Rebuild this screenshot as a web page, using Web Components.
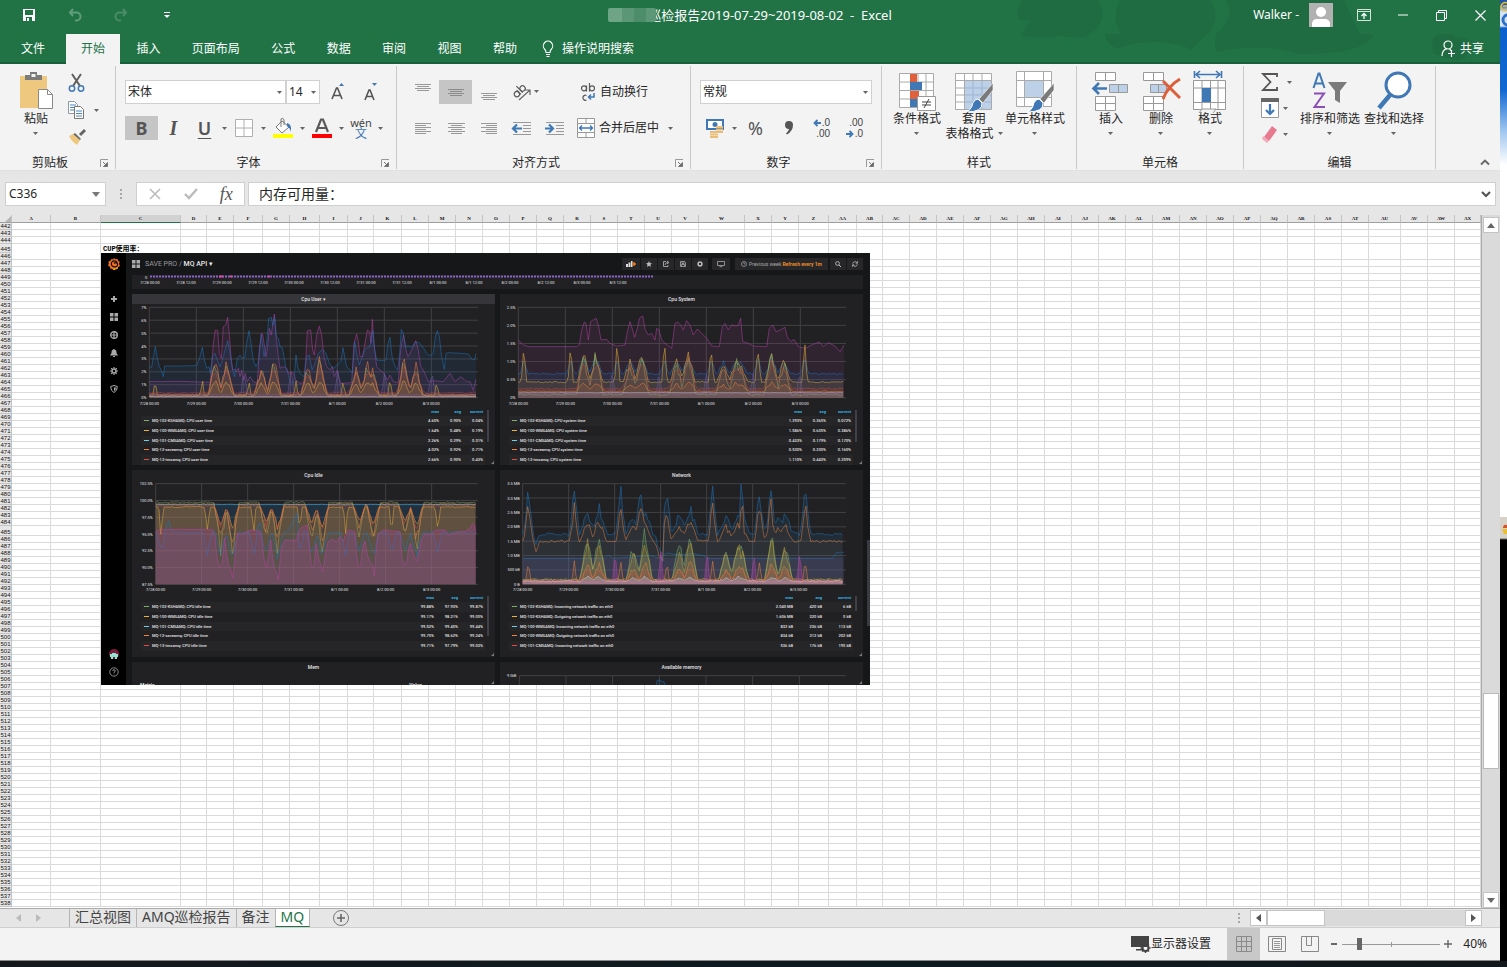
<!DOCTYPE html>
<html lang="zh-CN">
<head>
<meta charset="utf-8">
<title>巡检报告2019-07-29~2019-08-02 - Excel</title>
<style>
html,body{margin:0;height:100%}
body{font:12px/16px "Noto Sans","Noto Sans CJK SC",sans-serif;color:#262626;overflow:hidden}
</style>
</head>
<body>
<xl-desktop></xl-desktop>
<script>
const ICONS = {
save:[14,14,'<path d="M1 1h12v12H1z" fill="#fff"/><path d="M3 2h8v5H3zM4 9h6v4H4z" fill="#217346"/><path d="M5 10h2v3H5z" fill="#fff"/>'],
undo:[14,14,'<path d="M5 1L2 4.500l3 3.500M2 4.500h6.500a4 4 0 0 1 0 8H7" fill="none" stroke="#5f9d7b" stroke-width="2"/>'],
redo:[14,14,'<path d="M9 1l3 3.500L9 8M12 4.500H5.500a4 4 0 0 0 0 8H7" fill="none" stroke="#4a8c68" stroke-width="2"/>'],
qat:[6,6,'<path d="M0 .5h6" stroke="#fff"/><path d="M0 3h6L3 6z" fill="#fff"/>'],
dd:[5,3,'<path d="M0 0h5L2.500 3z" fill="#666"/>'],
dd2:[8,5,'<path d="M0 0h8L4 5z" fill="#777"/>'],
user:[24,24,'<path d="M0 0h24v24H0z" fill="#b1b1b1"/><circle cx="12" cy="9" r="5" fill="#fff"/><path d="M3 24v-4q1-4 5-4h8q4 0 5 4v4z" fill="#fff"/>'],
ribopt:[14,12,'<path d="M.5.5h13v11H.5zM.5 2.500h13" fill="none" stroke="#d5e5dc"/><path d="M7 10V5M4.500 7L7 4.500 9.500 7" fill="none" stroke="#fff" stroke-width="1.300"/>'],
min:[10,10,'<path d="M0 5h10" stroke="#fff"/>'],
max:[11,11,'<path d="M.5 2.500h8v8h-8zM2.500 2.500v-2h8v8h-2" fill="none" stroke="#fff"/>'],
close:[11,11,'<path d="M.5.5l10 10M10.500.5l-10 10" stroke="#fff" stroke-width="1.200"/>'],
bulb:[12,18,'<path d="M4 12.500Q4 10.500 2.500 9A4.700 4.700 0 1 1 9.500 9Q8 10.500 8 12.500zM4 14.500h4M4.500 16.500h3" fill="none" stroke="#fff" stroke-width="1.100"/>'],
share:[15,18,'<circle cx="7" cy="5" r="4" fill="none" stroke="#fff" stroke-width="1.200"/><path d="M1 16q0-6 5-7.500M8.500 9l2 2M7 13.500h7M10.500 10v7" fill="none" stroke="#fff" stroke-width="1.200"/>'],
paste:[36,40,'<path d="M2 5h27v32H2z" fill="#edc87e"/><path d="M7 9V4h5V1h7v3h5v5z" fill="#7b7b7b"/><path d="M13.500 3h4v3h-4z" fill="#f3f3f3"/><path d="M20.500 18.500h9l5 5v14h-14z" fill="#fff" stroke="#8a8a8a"/><path d="M29.500 18.500v5h5" fill="none" stroke="#8a8a8a"/>'],
cut:[18,20,'<path d="M4 1l8 12M13 1L5 13" stroke="#5f5f5f" stroke-width="2"/><circle cx="4" cy="15.500" r="2.700" fill="none" stroke="#3f78b5" stroke-width="1.500"/><circle cx="13" cy="15.500" r="2.700" fill="none" stroke="#3f78b5" stroke-width="1.500"/>'],
copy:[18,20,'<path d="M1.500 1.500h6l3 3v9h-9z" fill="#fff" stroke="#8d99a8"/><path d="M3 5h6M3 7.500h6M3 10h4" stroke="#4b83c0"/><path d="M7.500 6.500h6l3 3v9h-9z" fill="#fff" stroke="#777"/><path d="M9 11h6M9 13.500h6M9 16h6" stroke="#4b83c0"/>'],
brush:[18,16,'<path d="M17 1l-5 5" stroke="#666" stroke-width="3"/><path d="M7 4l6 6-2 1.500-6-6z" fill="#666"/><path d="M5 5l7 6-3 5Q4 13 1 7z" fill="#edc87e"/>'],
grow:[16,20,'<path d="M3 17l4.500-11h1L13 17M5 13.500h6" fill="none" stroke="#555" stroke-width="1.600"/><path d="M10 4h5L12.500 1z" fill="#3f78b5"/>'],
shrink:[16,20,'<path d="M3 18l4-10h1l4 10M4.500 14.500h6" fill="none" stroke="#555" stroke-width="1.600"/><path d="M10 1h5l-2.500 3z" fill="#3f78b5"/>'],
border:[18,18,'<path d="M.5.5h17v17H.5zM9 0v18M0 9h18" fill="#fff" stroke="#b0b0b0"/>'],
fill:[20,22,'<path d="M0 17h20v4H0z" fill="#ff0"/><path d="M9 4l7 6-7 6-6-6z" fill="#fff" stroke="#777"/><path d="M8 10V2q2-2 3 1v5" fill="none" stroke="#777"/><path d="M14 6q5 1 4 9-1-4-4-6z" fill="#3f78b5"/>'],
color:[20,22,'<path d="M0 17h20v4H0z" fill="red"/><path d="M4 15L9 2.500h2L16 15M6 11h8" fill="none" stroke="#5a5a5a" stroke-width="2.200"/>'],
at:[18,16,'<path d="M1 .5h16M3 2.500h12M1 4.500h16M3 6.500h12" stroke="#999"/>'],
am:[18,16,'<path d="M1 5.500h16M3 7.500h12M1 9.500h16M3 11.500h12" stroke="#8a8a8a"/>'],
ab:[18,16,'<path d="M1 9.500h16M3 11.500h12M1 13.500h16M3 15.500h12" stroke="#999"/>'],
jl:[18,16,'<path d="M1 3.500h16M1 5.500h11M1 7.500h16M1 9.500h11M1 11.500h16M1 13.500h11" stroke="#999"/>'],
jc:[18,16,'<path d="M1 3.500h17M4 5.500h11M1 7.500h17M4 9.500h11M1 11.500h17M4 13.500h11" stroke="#999"/>'],
jr:[18,16,'<path d="M1 3.500h16M6 5.500h11M1 7.500h16M6 9.500h11M1 11.500h16M6 13.500h11" stroke="#999"/>'],
ind1:[20,16,'<path d="M1 2.500h18M11 5.500h8M11 8.500h8M11 11.500h8M1 14.500h18" stroke="#999"/><path d="M1 8.500h9M5 4.500l-4 4 4 4" fill="none" stroke="#3f78b5" stroke-width="2.200"/>'],
ind2:[20,16,'<path d="M1 2.500h18M11 5.500h8M11 8.500h8M11 11.500h8M1 14.500h18" stroke="#999"/><path d="M0 8.500h8M4 4.500l4 4-4 4" fill="none" stroke="#3f78b5" stroke-width="2.200"/>'],
orient:[28,20,'<g fill="none" stroke="#5a5a5a" stroke-width="1.200" transform="rotate(-45 7 10)"><circle cx="4" cy="10" r="2.700"/><path d="M6.700 7v6"/><circle cx="12" cy="10" r="2.700"/><path d="M9.300 4v9"/></g><path d="M7 18L18 8M13 8h5v5" fill="none" stroke="#666" stroke-width="1.200"/><path d="M22 8h5l-2.500 3z" fill="#666"/>'],
wrap:[18,20,'<g fill="none" stroke="#5a5a5a" stroke-width="1.200"><circle cx="6" cy="6.300" r="2.500"/><path d="M8.500 3.500v6M11.500 1v8.500"/><circle cx="14" cy="6.300" r="2.500"/><path d="M8.500 13.500a2.500 2.500 0 1 0 0 4.500"/></g><path d="M16 11v4h-5M13 12.500l-2.500 2.500 2.500 2.500" fill="none" stroke="#3f78b5" stroke-width="1.500"/>'],
merge:[18,20,'<path d="M.5.5h17v19H.5zM.5 5.500h17M.5 14.500h17M9 .5v5M9 14.500v5" fill="#fff" stroke="#999"/><path d="M2.500 10h13M5 7.500L2.500 10 5 12.500M13 7.500l2.500 2.500-2.500 2.500" fill="none" stroke="#3f78b5" stroke-width="1.400"/>'],
money:[18,20,'<path d="M1 2h16v9H1z" fill="#fff" stroke="#3f78b5" stroke-width="2"/><circle cx="9" cy="6.500" r="2.500" fill="#3f78b5"/><path d="M10 9h7M10 11.500h7M10 14h7M4 14h8M4 16.500h8M4 19h8" stroke="#e9bd78" stroke-width="1.800"/>'],
arl:[8,8,'<path d="M1 4h7M4.500 1l-3 3 3 3" fill="none" stroke="#3f78b5" stroke-width="1.800"/>'],
arr:[8,8,'<path d="M0 4h7M3.500 1l3 3-3 3" fill="none" stroke="#3f78b5" stroke-width="1.800"/>'],
comma:[10,14,'<path d="M5 0a4 4 0 0 1 4 4q0 6-6 9.500l-1-1Q5 10 5 8a4 4 0 0 1 0-8z" fill="#555"/>'],
cond:[38,40,'<path d="M1.500 2.500h34v34h-34zM1.500 11h34M1.500 19.500h34M1.500 28h34M12.500 2v35M20 2v35M28 2v35" fill="#fff" stroke="#aaa"/><path d="M12 3h7v8h-7zM12 20h9v8h-9z" fill="#e0603c"/><path d="M12 11h12v8H12zM12 28h7v8h-7z" fill="#3f78b5"/><path d="M19.500 25.500h18v14h-18z" fill="#fff" stroke="#999"/><path d="M24 31h9M24 34h9M31 28l-5 9" stroke="#444"/>'],
tblfmt:[40,40,'<path d="M1.500 2.500h36v36h-36zM1.500 9.500h36M1.500 17h36M1.500 24h36M1.500 31h36M10.500 2v36M19 2v36M28 2v36" fill="#fff" stroke="#aaa"/><path d="M11 10h26v28H11z" fill="#bcd0e8"/><path d="M11 17h26M11 24h26M11 31h26M19 10v28M28 10v28" stroke="#9db4d0"/><path d="M39 12v7L29 32l-4-4z" fill="#7a7a7a" stroke="#fff" stroke-width=".6"/><path d="M24 28l4 4q1 9-16 9 5-2 6-6 1-6 6-7z" fill="#3f78b5" stroke="#fff"/>'],
cellfmt:[40,40,'<path d="M1.500.5h35v35h-35zM1.500 9.500h35M1.500 26.500h35M9.500 0v36M28.500 0v36" fill="#fff" stroke="#aaa"/><path d="M10 10h18v16H10z" fill="#bcd0e8"/><path d="M39 12v7L29 32l-4-4z" fill="#7a7a7a" stroke="#fff" stroke-width=".6"/><path d="M24 28l4 4q1 9-16 9 5-2 6-6 1-6 6-7z" fill="#3f78b5" stroke="#fff"/>'],
ins:[40,40,'<path d="M4.500 1.500h20v8h-20zM14.500 1v8M4.500 25.500h20v14h-20zM14.500 25v14M4.500 32.500h20" fill="#fff" stroke="#999"/><path d="M18.500 13.500h18v8h-18zM27.500 13v8" fill="#bcd0e8" stroke="#999"/><path d="M2 17.500h14M8 12l-5.500 5.500L8 23" fill="none" stroke="#3f78b5" stroke-width="2.600"/>'],
del:[40,40,'<path d="M2.500 1.500h20v8h-20zM12.500 1v8M2.500 25.500h20v14h-20zM12.500 25v14M2.500 32.500h20" fill="#fff" stroke="#999"/><path d="M9.500 13.500h16v8h-16zM17.500 13v8" fill="#bcd0e8" stroke="#999"/><path d="M22 10l17 17M39 8Q27 15 22 28" fill="none" stroke="#dc5f3a" stroke-width="3"/>'],
fmt:[36,42,'<path d="M2.500 0v7M29.500 0v7M4 3.500h24M8 0L4 3.500 8 7M24 0l4 3.500L24 7" fill="none" stroke="#3f78b5" stroke-width="1.600"/><path d="M1.500 9.500h32v29h-32zM1.500 17h32M1.500 31.500h32M10 9v30M18.500 9v30M26 9v30" fill="#fff" stroke="#999"/><path d="M10 17h9v14h-9z" fill="#3f78b5"/><path d="M7 42l3-4h14l-3 4" fill="#f3f3f3" stroke="#999"/>'],
sum:[18,18,'<path d="M16 4V1H2l7.500 8L2 17h14v-3" fill="none" stroke="#555" stroke-width="1.800"/>'],
down:[18,20,'<path d="M.5.5h17v19H.5z" fill="#fff" stroke="#999"/><path d="M0 0h18v4H0z" fill="#666"/><path d="M9 6v10M5 12l4 4 4-4" fill="none" stroke="#3f78b5" stroke-width="2.200"/>'],
erase:[18,18,'<path d="M11 1l5 4-8 11-5-4z" fill="#e87a90"/><path d="M2 11l6 5-2 2-5-4z" fill="#f3aab8"/>'],
sort:[36,40,'<path d="M1.500 17L6.500 2.500h1L12.500 17M3.500 12.500h7" fill="none" stroke="#3f78b5" stroke-width="2"/><path d="M2 22.500h10L2.500 36H13" fill="none" stroke="#8c4fb5" stroke-width="2"/><path d="M16 11h19l-7 9v12l-5-3V20z" fill="#7b7b7b"/>'],
find:[36,42,'<circle cx="22" cy="14" r="12" fill="#fff" stroke="#3f78b5" stroke-width="3"/><path d="M14 24L3 37" stroke="#3f78b5" stroke-width="4.500"/>'],
launch:[8,8,'<path d="M.5 8V.5H8" fill="none" stroke="#999"/><path d="M3 3l3.500 3.500M7.500 3.500v4h-4z" fill="#666" stroke="#777"/>'],
up:[10,6,'<path d="M1 5.500L5 1.500 9 5.500" fill="none" stroke="#666" stroke-width="1.800"/>'],
chev:[10,7,'<path d="M1 1l4 4 4-4" fill="none" stroke="#555" stroke-width="2.200"/>'],
x:[12,12,'<path d="M1 1l10 10M11 1L1 11" stroke="#bbb" stroke-width="1.600"/>'],
ok:[14,12,'<path d="M1 6l4 4 8-9" fill="none" stroke="#bbb" stroke-width="2.400"/>'],
dots:[3,11,'<path d="M0 0h2v2H0zM0 4h2v2H0zM0 8h2v2H0z" fill="#a8a8a8"/>'],
tl:[5,8,'<path d="M5 0v8L0 4z" fill="#bbb"/>'],tr:[5,8,'<path d="M0 0v8l5-4z" fill="#bbb"/>'],
sl:[5,8,'<path d="M5 0v8L0 4z" fill="#555"/>'],sr:[5,8,'<path d="M0 0v8l5-4z" fill="#555"/>'],
su:[8,5,'<path d="M0 5h8L4 0z" fill="#666"/>'],sd:[8,5,'<path d="M0 0h8L4 5z" fill="#666"/>'],
plus:[16,16,'<circle cx="8" cy="8" r="7.500" fill="none" stroke="#777"/><path d="M8 4v8M4 8h8" stroke="#666" stroke-width="1.600"/>'],
disp:[20,18,'<path d="M0 1h18v11H0zM5 14h7v1.500H5z" fill="#444"/><circle cx="14.500" cy="13" r="3" fill="none" stroke="#444" stroke-width="2"/><path d="M14.500 8v2M14.500 16v2M9.500 13h2M17.500 13h2M11 9.500l1.300 1.300M16.700 15.200L18 16.500M18 9.500l-1.300 1.300M12.300 15.200L11 16.500" stroke="#444" stroke-width="1.500"/>'],
v1:[16,16,'<path d="M.5.5h15v15H.5zM5.500 0v16M10.500 0v16M0 5.500h16M0 10.500h16" fill="none" stroke="#8a8a8a"/>'],
v2:[18,16,'<path d="M.5.5h17v15H.5zM4.500 2.500h9v11h-9z" fill="none" stroke="#888"/><path d="M6 5.500h6M6 7.500h6M6 9.500h6M6 11.500h6" stroke="#999"/>'],
v3:[18,16,'<path d="M.5.5h17v15H.5zM5.500.5v9h5v-9" fill="none" stroke="#888"/>'],
minus:[8,8,'<path d="M1 4h6" stroke="#666" stroke-width="2"/>'],add:[8,8,'<path d="M0 4h8M4 0v8" stroke="#666" stroke-width="1.400"/>'],
graf:[12,12,'<path d="M6 0l1.300 1.300L9.500 1l.5 1.800 1.700 1L11 6l1 2-1.800 1-.7 2-2-.2L6 12l-1.500-1.300-2 .1-.6-2L0 7.500l.8-2L.5 3.500l2-.7L3.500 1l1.700.4z" fill="#f4701e"/><path d="M9.300 6A3 3 0 1 0 7 8.700 2 2 0 1 0 6 5.500" fill="none" stroke="#111" stroke-width="1.200"/><path d="M1 9q5 4 9 0l-1 2-3 1z" fill="#fbca0a"/>'],
gplus:[8,8,'<path d="M1 4h6M4 1v6" stroke="#aaa" stroke-width="2"/>'],
ggrid:[8,8,'<path d="M0 0h3.500v3.500H0zM4.500 0H8v3.500H4.500zM0 4.500h3.500V8H0zM4.500 4.500H8V8H4.500z" fill="#aaa"/>'],
gcomp:[8,8,'<circle cx="4" cy="4" r="3.300" fill="none" stroke="#aaa" stroke-width="1.400"/><path d="M4 1v6M1 4h6" stroke="#aaa" stroke-width="1.200"/>'],
gbell:[8,8,'<path d="M4 0q3 1 2.500 4L8 6.500H0L1.500 4Q1 1 4 0zM3 7h2v1H3z" fill="#aaa"/>'],
ggear:[8,8,'<circle cx="4" cy="4" r="2" fill="none" stroke="#aaa" stroke-width="1.500"/><path d="M4 0v1.500M4 6.500V8M0 4h1.500M6.500 4H8M1.200 1.200l1 1M5.800 5.800l1 1M6.800 1.200l-1 1M2.200 5.800l-1 1" stroke="#aaa" stroke-width="1.200"/>'],
gshield:[8,8,'<path d="M4 .5l3.300 1Q7.500 6 4 7.500.5 6 .7 1.500z" fill="none" stroke="#aaa"/><path d="M4 2.500h2Q6 5 4 6z" fill="#aaa"/>'],
gava:[10,10,'<circle cx="5" cy="5" r="5" fill="#7c1c3c"/><path d="M1 5h2V4h4v1h2v3H8v2H6V8H4v2H2V8H1z" fill="#8fe3cf"/>'],
ghelp:[10,10,'<circle cx="5" cy="5" r="4.200" fill="none" stroke="#aaa" stroke-width=".8"/><path d="M3.700 4q0-1.300 1.300-1.300T6.300 4Q6.300 4.800 5 5.300V6M5 6.700v.8" fill="none" stroke="#aaa" stroke-width=".8"/>'],
badd:[10,6,'<path d="M0 3h2v3H0zM2.500 1.500h2V6h-2zM5 0h1.500v6H5z" fill="#ddd"/><path d="M6 3h4M8 1v4" stroke="#eb7b18" stroke-width="1.400"/>'],
bstar:[6,6,'<path d="M3 0l.9 2L6 2.200 4.400 3.700 5 6 3 4.800 1 6l.5-2.300L0 2.200 2.100 2z" fill="#bbb"/>'],
bshare:[6,6,'<path d="M3 .5H.5v5h4.500V4M2 4q0-2.500 3-2.500M4 0l2 1.500L4 3" fill="none" stroke="#aaa" stroke-width=".9"/>'],
bsave:[6,6,'<path d="M.5.5h4l1 1v4h-5zM2 .5v2h2v-2M1.500 5.500v-2h3v2" fill="none" stroke="#aaa" stroke-width=".8"/>'],
bgear:[6,6,'<circle cx="3" cy="3" r="1.900" fill="none" stroke="#bbb" stroke-width="1.500"/>'],
btv:[8,6,'<path d="M.5.5h7v4h-7zM2.500 5.700h3" fill="none" stroke="#999" stroke-width=".9"/>'],
bclock:[6,6,'<circle cx="3" cy="3" r="2.500" fill="none" stroke="#aaa" stroke-width=".7"/><path d="M3 1.500V3h1.200" fill="none" stroke="#aaa" stroke-width=".7"/>'],
bzoom:[6,6,'<circle cx="2.500" cy="2.500" r="1.900" fill="none" stroke="#bbb" stroke-width=".9"/><path d="M4 4l2 2" stroke="#bbb"/>'],
bref:[6,6,'<path d="M.7 2.700A2.400 2.400 0 0 1 5 1.700M5.300 3.300A2.400 2.400 0 0 1 1 4.300M5.500.3V2.200H3.700M.5 5.700V3.800h1.800" fill="none" stroke="#bbb" stroke-width=".8"/>'],
all:[6,6,'<path d="M6 0v6H0z" fill="#b5b5b5"/>'],
resize:[3,3,'<path d="M3 0v3H0z" fill="#777"/>']
};
const ic = n => { const [w,h,b] = ICONS[n]; return `<svg class="ic" width="${w}" height="${h}" viewBox="0 0 ${w} ${h}" aria-hidden="true">${b}</svg>`; };
const BASE = `*{box-sizing:border-box}:host{display:block}.ic{display:block;flex:none;overflow:visible}
button{font:inherit;color:inherit;background:none;border:0;padding:0;margin:0;display:flex;align-items:center;justify-content:center;white-space:nowrap}
a{color:inherit;text-decoration:none}`;
const define = (name, css, html) => customElements.define(name, class extends HTMLElement {
  connectedCallback(){
    if (this.shadowRoot) return;
    const t = document.createElement('template');
    t.innerHTML = `<style>${BASE}${css}</style>` + (typeof html === 'function' ? html(n => this.getAttribute(n) || '', this) : html);
    this.attachShadow({mode:'open'}).append(t.content.cloneNode(true));
  }
});

/* ---------- title bar and ribbon tabs ---------- */
define('xl-titlebar', `
:host{background:#217346;color:#fff;height:34px;position:relative}
.bar{display:grid;grid-template-columns:1fr auto 1fr;align-items:center;height:30px;position:relative}
.quick{display:flex;align-items:center;padding-left:22px;gap:32px}
.quick button:last-child{margin-left:4px}
.title{display:flex;align-items:center;font-size:13px;white-space:pre}
.mosaic{width:48px;height:14px;background:linear-gradient(90deg,#6fa587 0 30%,#5b9676 30% 55%,#4e8d6a 55% 80%,#5c9777 80%);border-radius:2px;margin-right:-8px;z-index:1}
.win{display:flex;align-items:center;justify-content:flex-end;padding-right:14px}
.win .o{width:61px}.win .m{width:17px}.win .r{width:60px}.win .c{margin-left:4px}
.win .u{margin-left:10px}
.deco{position:absolute;right:0;top:0}`, `
<svg class="deco" width="490" height="34" viewBox="0 0 490 34" aria-hidden="true"><g fill="#1e6640" opacity=".6"><path d="M12 0Q0 24 20 20Q16 30 10 34H80Q100 20 88 0zM110 0Q100 20 112 34H198Q212 16 200 0zM216 0Q226 18 206 34H350Q340 14 334 0z"/></g></svg>
<div class="bar"><div class="quick"><button aria-label="保存">${ic('save')}</button><button aria-label="撤消">${ic('undo')}</button><button aria-label="恢复">${ic('redo')}</button><button aria-label="自定义">${ic('qat')}</button></div>
<div class="title"><span class="mosaic"></span><span>巡检报告2019-07-29~2019-08-02  -  Excel</span></div>
<div class="win"><span>Walker -</span><span class="u">${ic('user')}</span><button class="o" aria-label="功能区显示选项">${ic('ribopt')}</button><button class="m" aria-label="最小化">${ic('min')}</button><button class="r" aria-label="还原">${ic('max')}</button><button class="c" aria-label="关闭">${ic('close')}</button></div></div>`);

define('xl-tabs', `
:host{background:#217346;color:#fff;position:relative}
.row{display:flex;height:30px;align-items:stretch;background:linear-gradient(#217346 28px,#17603a 28px)}
.deco{position:absolute;right:0;top:0}
.file{width:66px;position:relative}
nav{display:flex;justify-content:space-between;width:466px}
nav a{padding:7px 15px 0;white-space:nowrap}
nav a.on{background:#f3f3f3;color:#217346}
.tell{gap:8px;margin-left:10px}
.share{margin-left:auto;margin-right:16px;gap:4px;position:relative}`, `
<div class="row"><button class="file">文件</button><nav><a href="#" class="on">开始</a>${['插入','页面布局','公式','数据','审阅','视图','帮助'].map(t=>`<a href="#">${t}</a>`).join('')}</nav>
<button class="tell">${ic('bulb')}操作说明搜索</button><svg class="deco" width="490" height="28" viewBox="0 0 490 28" aria-hidden="true"><g fill="#1e6640" opacity=".6"><path d="M10 0Q20 6 50 2Q76 6 80 0zM95 0Q96 12 108 14Q140 4 165 10Q180 14 182 16Q188 8 198 0zM206 0Q204 14 206 18Q250 8 290 20Q356 20 364 0Q350 -4 350 0zM424 20Q418 0 434 -2Q444 0 446 4Q462 0 460 16Q456 26 446 26z"/></g></svg><button class="share">${ic('share')}共享</button></div>`);

/* ---------- ribbon ---------- */
define('rb-group', `
:host{display:flex;flex-direction:column;border-right:1px solid #c9c9c9;margin:2px 0 1px;flex:none}
.body{flex:1;display:flex;min-height:0}
.foot{display:grid;grid-template-columns:1fr;height:12px;align-items:center;text-align:center;line-height:12px}
.foot.l{grid-template-columns:1fr 15px}
.foot button{justify-content:flex-start}`,
a=>`<div class="body"><slot></slot></div><div class="foot${a('launch')?' l':''}"><span>${a('label')}</span>${a('launch')?`<button aria-label="${a('label')}设置">${ic('launch')}</button>`:''}</div>`);
define('rb-tool', `
:host{flex:none;display:flex;height:24px}
button{width:100%;height:100%;gap:4px}
:host([on]) button{background:#c5c5c5}
:host([text]) button{justify-content:flex-start;padding-left:6px}
.t{font-size:18px;line-height:22px;color:#555}.big{font-weight:700}.it{font-family:"Liberation Serif",serif;font-style:italic;font-weight:700;font-size:20px}
.un{text-decoration:underline;text-decoration-thickness:1px;text-underline-offset:3px;font-weight:600}
.py{display:flex;flex-direction:column;align-items:center;font-size:11px;line-height:11px;color:#444}.py b{color:#3f78b5;font-weight:400;font-size:12px;line-height:12px}
.n{display:grid;font:10px/11px "Liberation Sans",sans-serif;color:#444}.n span{display:flex;align-items:center;justify-content:flex-end;gap:1px}`,
(a)=>`<button aria-label="${a('name')||a('icon')||a('text')}">${a('icon')?ic(a('icon')):''}${
 {B:'<span class="t big">B</span>',I:'<span class="t it">I</span>',U:'<span class="t un">U</span>',P:'<span class="t">%</span>',W:'<span class="py"><span>wén</span><b>文</b></span>',
 D1:`<span class="n"><span>${ic('arl')}.0</span><span>.00</span></span>`,D2:`<span class="n"><span>.00</span><span>${ic('arr')}.0</span></span>`}[a('glyph')]||''}${a('text')}</button>`);
define('rb-big', `
:host{flex:none}
button{width:100%;flex-direction:column;justify-content:flex-start;line-height:15px;height:78px}
.i{height:40px;display:flex;align-items:flex-start}
.l{white-space:pre;display:flex;flex-direction:column;align-items:center}
.l span{display:flex;align-items:center;gap:4px}
.d{margin-top:6px}`,
a=>{const [l1,l2]=a('label').split('|');return `<button><span class="i">${ic(a('icon'))}</span><span class="l"><span>${l1}</span>${l2?`<span>${l2}${ic('dd')}</span>`:`<span class="d">${ic('dd')}</span>`}</span></button>`});
define('rb-combo', `
:host{flex:none;display:grid;height:24px;background:#fff;border:1px solid #d0d0d0;align-items:center}
select,.a{grid-area:1/1}select{appearance:none;border:0;background:none;font:inherit;color:inherit;width:100%;height:22px;padding:0 2px;margin:0}
.a{justify-self:end;margin-right:3px;pointer-events:none}`,
a=>`<select aria-label="${a('name')}"><option>${a('value')}</option></select><span class="a">${ic('dd')}</span>`);
define('xl-ribbon', `
:host{background:#f3f3f3;height:107px;display:flex;border-bottom:1px solid #e0e0e0}
.col{display:flex;flex-direction:column}
.rows{display:flex;flex-direction:column;gap:12px;padding:14px 0 0 9px}
.row{display:flex}
.w9{width:9px}.w30{width:30px}.w31{width:31px}.w33{width:33px}
.small{padding-top:5px;gap:3px}
.end{margin-left:auto;display:flex;align-items:flex-end;padding:0 10px 5px}`, `
<rb-group label="剪贴板" launch="1" style="width:116px"><rb-big icon="paste" label="粘贴" style="width:38px;margin:5px 0 0 17px"></rb-big>
<div class="col small" style="padding-left:8px"><rb-tool icon="cut" name="剪切" style="width:27px"></rb-tool><div class="row"><rb-tool icon="copy" name="复制" style="width:26px"></rb-tool><rb-tool icon="dd" name="复制选项" style="width:15px"></rb-tool></div><rb-tool icon="brush" name="格式刷" style="width:27px"></rb-tool></div></rb-group>
<rb-group label="字体" launch="1" style="width:281px"><div class="rows"><div class="row"><rb-combo name="字体" value="宋体" style="width:161px"></rb-combo><rb-combo name="字号" value="14" style="width:34px"></rb-combo><rb-tool icon="grow" class="w33" name="增大字号"></rb-tool><rb-tool icon="shrink" class="w33" name="减小字号"></rb-tool></div>
<div class="row"><rb-tool glyph="B" on class="w33" name="加粗"></rb-tool><rb-tool glyph="I" class="w31" name="倾斜"></rb-tool><rb-tool glyph="U" class="w31" name="下划线"></rb-tool><rb-tool icon="dd" class="w9"></rb-tool><rb-tool icon="border" class="w30" name="边框"></rb-tool><rb-tool icon="dd" class="w9"></rb-tool><rb-tool icon="fill" class="w30" name="填充颜色"></rb-tool><rb-tool icon="dd" class="w9"></rb-tool><rb-tool icon="color" class="w30" name="字体颜色"></rb-tool><rb-tool icon="dd" class="w9"></rb-tool><rb-tool glyph="W" class="w30" name="拼音"></rb-tool><rb-tool icon="dd" class="w9"></rb-tool></div></div></rb-group>
<rb-group label="对齐方式" launch="1" style="width:294px"><div class="rows"><div class="row"><rb-tool icon="at" class="w33"></rb-tool><rb-tool icon="am" on class="w33"></rb-tool><rb-tool icon="ab" class="w33"></rb-tool><rb-tool icon="orient" style="width:41px"></rb-tool><rb-tool icon="wrap" text="自动换行" style="width:100px;margin-left:26px"></rb-tool></div>
<div class="row"><rb-tool icon="jl" class="w33"></rb-tool><rb-tool icon="jc" class="w33"></rb-tool><rb-tool icon="jr" class="w33"></rb-tool><rb-tool icon="ind1" class="w33"></rb-tool><rb-tool icon="ind2" class="w33"></rb-tool><rb-tool icon="merge" text="合并后居中" style="width:95px"></rb-tool><rb-tool icon="dd" class="w9"></rb-tool></div></div></rb-group>
<rb-group label="数字" launch="1" style="width:191px"><div class="rows"><rb-combo name="数字格式" value="常规" style="width:172px"></rb-combo><div class="row"><rb-tool icon="money" class="w30"></rb-tool><rb-tool icon="dd" class="w9"></rb-tool><rb-tool glyph="P" class="w33" name="百分比"></rb-tool><rb-tool icon="comma" class="w33"></rb-tool><rb-tool glyph="D1" name="增加小数位" class="w33"></rb-tool><rb-tool glyph="D2" name="减少小数位" class="w33"></rb-tool></div></div></rb-group>
<rb-group label="样式" style="width:195px"><div class="row" style="padding:5px 0 0 7px"><rb-big icon="cond" label="条件格式" style="width:56px"></rb-big><rb-big icon="tblfmt" label="套用|表格格式" style="width:58px"></rb-big><rb-big icon="cellfmt" label="单元格样式" style="width:64px"></rb-big></div></rb-group>
<rb-group label="单元格" style="width:167px"><div class="row" style="padding:5px 0 0 9px"><rb-big icon="ins" label="插入" style="width:50px"></rb-big><rb-big icon="del" label="删除" style="width:50px"></rb-big><rb-big icon="fmt" label="格式" style="width:48px"></rb-big></div></rb-group>
<rb-group label="编辑" style="width:192px"><div class="col small" style="padding-left:12px;padding-top:4px;gap:2px"><div class="row"><rb-tool icon="sum" style="width:27px"></rb-tool><rb-tool icon="dd" style="width:12px"></rb-tool></div><div class="row"><rb-tool icon="down" style="width:27px"></rb-tool><rb-tool icon="dd"></rb-tool></div><div class="row"><rb-tool icon="erase" style="width:27px"></rb-tool><rb-tool icon="dd"></rb-tool></div></div><div class="row" style="padding:5px 0 0 3px"><rb-big icon="sort" label="排序和筛选" style="width:64px"></rb-big><rb-big icon="find" label="查找和选择" style="width:64px"></rb-big></div></rb-group>
<div class="end"><button aria-label="折叠功能区">${ic('up')}</button></div>`);

define('xl-formula', `
:host{background:#e6e6e6;padding:11px 4px 9px 5px}
.row{display:flex;height:24px;align-items:stretch}
.name{display:flex;align-items:center;width:101px;background:#fff;border:1px solid #cfcfcf;padding-right:5px}
input{border:0;outline:0;background:none;font:inherit;color:inherit;flex:1;min-width:0;padding:0 3px}
.dots{width:30px;display:flex;align-items:center;justify-content:center}
.fx{width:109px;background:#fff;border:1px solid #cfcfcf;display:flex}.fx button{flex:1}
.fx i{font:italic 18px/20px "Liberation Serif",serif;color:#555}
.f{flex:1;margin-left:3px;background:#fff;border:1px solid #cfcfcf;display:flex;align-items:center;padding-right:4px;font-size:14px}
.f input{padding-left:10px}`, `
<div class="row"><label class="name"><input aria-label="名称框" value="C336">${ic('dd2')}</label><div class="dots">${ic('dots')}</div>
<div class="fx"><button aria-label="取消">${ic('x')}</button><button aria-label="输入">${ic('ok')}</button><button aria-label="插入函数"><i>fx</i></button></div>
<label class="f"><input aria-label="编辑栏" value="内存可用量：">${ic('chev')}</label></div>`);

/* ---------- charts inside the pasted dashboard ---------- */
const rng = s => () => (s = (s * 16807) % 2147483647) / 2147483647;
/* polyline of a noisy baseline with triangular peaks [x, height, halfwidth] */
const wave = (x0, x1, base, peaks, noise, seed) => {
  const r = rng(seed * 7919), out = [];
  for (let x = x0; x <= x1; x += 5) {
    let h = 0;
    for (const [p, ph, w] of peaks) { const v = ph * Math.max(0, 1 - Math.abs(x - p) / w); if (Math.abs(v) > Math.abs(h)) h = v; }
    out.push(x + ',' + (base - h + (r() - .5) * (noise + Math.abs(h) * .35)).toFixed(1));
  }
  return out.join(' ');
};
const VARY = [.9, 1, .7, .95, .75, 1, .65, .85, .7, .95, .8];
const at = (xs, h, w) => xs.map((x, i) => [x, h * VARY[i % 11], w]);
const series = (list, bottom) => list.map(([color, pts, fill, line]) => {
  const first = pts.split(' ')[0].split(',')[0], last = pts.trim().split(' ').pop().split(',')[0];
  return `<polygon points="${first},${bottom} ${pts} ${last},${bottom}" fill="${color}" fill-opacity="${fill ?? .1}"/><polyline points="${pts}" fill="none" stroke="${color}" stroke-width="2" stroke-opacity="${line ?? .75}"/>`;
}).join('');
const G='#7eb26d',Y='#eab839',C='#6ed0e0',O='#ef843c',R='#e24d42',B='#1f78c1',M='#ba43a9',P='#705da0',W='#cfc6e0';
const DAYS = ['7/28 00:00','7/29 00:00','7/30 00:00','7/31 00:00','8/1 00:00','8/2 00:00','8/3 00:00'];
const b1=[346,380,484,522,624,660,768,802,817,912,948], s1=[166,307,447,588,729,870,1010];
const b2=[282,318,420,455,560,595,700,738,752,845,882], s2=[102,242,382,523,664,804,944];
const b3=[362,397,498,533,635,667,778,820,915,950], s3=[183,322,461,599,737,875,1013];
const b4=[292,327,430,465,568,600,708,745,755,845,885], s4=[115,253,392,530,668,808,946];
const CHARTS = {
user:{o:[96,282],h:104,x:[148,1134,141],y:[292,563,['7%','6%','5%','4%','3%','2%','1%','0%']],s:()=>[
 [M,'148,515 240,514 330,517 335,470 340,400 346,360 353,362 358,430 364,445 370,350 377,345 383,322 388,375 393,440 398,480 405,478 410,485 415,475 420,500 425,480 430,510 436,490 442,515 450,500 460,515 472,520 478,420 484,370 488,372 492,400 498,440 503,410 508,355 514,375 518,345 523,312 529,390 535,440 540,475 548,470 560,475 565,490 572,488 580,488 587,510 600,520 612,518 618,440 622,362 632,360 638,420 643,435 650,375 658,348 665,375 672,440 680,470 690,480 697,470 703,500 712,480 716,500 722,520 755,518 762,400 770,372 775,395 780,440 787,440 795,400 802,360 809,365 813,400 817,328 822,400 830,470 840,480 852,490 862,510 870,495 880,515 895,518 900,440 905,400 911,375 918,420 924,440 930,430 940,410 947,392 955,420 962,470 970,480 985,515 1000,512 1030,515 1050,490 1065,515 1082,500 1100,515 1110,515 1120,540 1128,508'],
 [B,'148,470 155,472 160,440 166,410 172,445 178,470 184,480 190,500 194,468 240,468 290,467 300,440 307,412 313,450 320,475 327,470 331,490 337,440 345,430 352,450 360,470 370,440 378,410 383,392 390,430 398,480 404,500 408,470 412,445 420,435 426,445 434,443 440,400 447,362 453,400 460,450 468,470 475,455 484,374 492,440 500,400 506,325 514,322 518,345 524,322 529,380 535,385 540,410 547,413 552,440 558,475 564,490 570,515 580,520 584,490 588,435 593,470 600,490 612,500 620,440 628,435 636,480 645,460 655,430 668,418 678,430 688,460 700,475 712,465 722,455 729,413 735,445 740,470 750,480 757,490 764,395 772,440 778,465 787,440 797,415 808,412 812,400 818,362 824,420 830,450 845,452 858,450 864,400 870,382 876,440 880,455 886,470 893,480 899,430 904,358 910,370 916,410 926,408 934,412 945,398 955,396 968,410 980,430 988,437 1000,430 1006,380 1012,362 1018,380 1025,440 1033,478 1038,430 1045,428 1080,430 1105,432 1118,450 1124,448 1128,430'],
 [G,wave(148,1128,558,at(b1,110,22),4,3)],[Y,wave(148,1128,556,[...s1.map(x=>[x,50,6]),...at(b1,48,20)],3,4)],[O,wave(148,1128,553,at(b1,112,20),4,5)],[R,wave(148,1128,548,at(b1,80,22),5,6),.1,.55],[P,wave(148,1128,554,s1.slice(2).map(x=>[x-15,70,10]),3,7)],[W,wave(148,1128,560,[],1,8)]]},
sys:{o:[30,162],h:104,x:[85,1068,141],y:[172,443,['2.5%','2.0%','1.5%','1.0%','0.5%','0%']],s:()=>[
 [M,'85,270 100,285 115,290 260,290 268,285 275,240 283,216 288,220 295,270 302,215 308,210 312,210 318,204 325,225 333,270 350,268 360,280 380,288 405,285 412,245 420,215 428,240 434,262 442,235 448,205 458,198 466,240 475,255 485,250 495,270 500,235 507,240 515,270 525,280 545,295 555,220 563,216 572,225 580,240 590,212 600,225 610,255 622,237 635,250 650,265 665,288 688,290 697,230 705,220 715,240 725,225 738,228 745,225 752,205 758,275 770,278 790,288 830,290 838,235 848,225 858,245 870,240 885,232 892,262 903,275 912,268 925,290 945,295 965,285 988,276 1000,290 1015,278 1035,288 1050,305 1062,285'],
 [B,wave(85,1062,371,[...at(b2,50,20),...s2.map(x=>[x,42,12])],5,9)],[Y,wave(85,1062,396,[...s2.map(x=>[x,115,8]),...at(b2,85,20)],5,10)],[G,wave(85,1062,434,at(b2,125,22),5,11)],[R,wave(85,1062,416,at(b2,88,22),5,12),.1,.6],[O,wave(85,1062,424,at(b2,30,24),3,13)],[P,wave(85,1062,432,s2.slice(2).map(x=>[x-15,65,9]),3,14)],[W,wave(85,1062,428,[],1,15)]]},
idle:{o:[96,45],h:114,x:[167,1134,138],y:[56,358,['102.5%','100.0%','97.5%','95.0%','92.5%','90.0%','87.5%']],s:()=>[
 [B,wave(167,1128,119,[],1,16),.18,.8],[G,wave(167,1128,112,at(b3,-150,20),4,17),.04],[O,wave(167,1128,117,at(b3,-115,20),4,18),.17],[Y,wave(167,1128,126,[...s3.map(x=>[x,-80,7]),...at(b3,-65,18)],4,19),.12],[R,wave(167,1128,122,at(b3,-78,18),4,20),.06],[C,wave(167,1128,118,[],1,22),0,.6],
 [B,wave(167,1128,202,[...s3.map(x=>[x,-60,14]),...at(b3,-75,18),[205,38,10],[590,60,25],[480,40,14]],9,21),.08],
 [M,'167,200 180,194 240,193 338,194 346,220 350,270 358,305 366,300 370,260 374,218 380,270 386,300 392,312 398,338 404,290 408,240 412,205 425,208 440,200 455,195 480,198 486,225 492,280 500,308 506,270 512,225 518,280 524,310 530,325 535,343 540,290 545,245 555,225 570,226 590,225 596,200 604,188 622,180 628,240 634,305 642,303 648,235 656,280 668,320 676,270 684,230 700,222 708,232 720,215 730,228 745,195 765,200 770,270 776,305 782,303 788,245 795,228 802,270 810,290 818,300 823,333 828,260 834,208 850,195 875,198 900,200 906,280 914,302 920,290 926,250 932,235 938,260 945,280 950,288 958,260 964,225 975,205 990,210 1005,196 1035,195 1045,210 1060,205 1080,200 1095,200 1110,190 1118,175 1124,180 1128,205',.24,.8]]},
net:{o:[30,45],h:114,x:[98,1068,138],y:[56,358,['3.5 MB','3.0 MB','2.5 MB','2.0 MB','1.5 MB','1.0 MB','500 kB','0 B']],s:()=>[
 [B,wave(98,1062,208,[...s4.map(x=>[x,128,15]),...at(b4,80,24),[452,125,20],[755,150,12],[842,145,14],[138,-42,8],[515,-80,20],[860,45,60]],8,23),.12],
 [O,wave(98,1062,229,[...s4.map(x=>[x,108,14]),...at(b4,65,24),[452,105,18],[755,128,10],[842,120,12],[138,-34,8],[515,-66,20],[860,35,55]],7,24),.06],
 [B,'98,280 340,280 355,272 370,280 480,272 510,280 530,264 570,270 610,266 640,272 652,280 780,280 1028,280 1040,262 1062,262',.04,.7],[P,'98,279 1062,279',.2,.2],
 [G,wave(98,1062,345,at(b4,150,22),5,25),.15],[Y,wave(98,1062,343,at(b4,120,22),5,26),.18,.55],[R,wave(98,1062,347,at(b4,35,26),4,28)],[M,wave(98,1062,350,s4.slice(2).map(x=>[x-17,88,8]),3,29),.3],[O,wave(98,1062,350,[...s4.map(x=>[x,60,8]),...at(b4,60,20)],4,30)],[W,wave(98,1062,348,at(b4,14,20),4,27),.3]]},
avail:{o:[30,621],h:14,x:[88,1068,140],y:[632,700,['9 GiB']],s:()=>[[B,'498,662 502,646 510,645 515,650 522,650 526,662']]}
};
define('gf-chart', `:host{display:block}svg{display:block;width:100%;font:4px Roboto,sans-serif;fill:#e4e4e5}`, a => {
  const c = CHARTS[a('kind')], [ox,oy] = c.o, X = v => (v-ox)/3, Yv = v => (v-oy)/3, [x0,x1,dx] = c.x, [y0,y1,ls] = c.y;
  const step = ls.length > 1 ? (y1-y0)/(ls.length-1) : 0;
  const path = ls.map((_,i)=>`M${x0} ${y0+i*step}H${x1}`).join('') + DAYS.map((_,i)=>`M${x0+i*dx} ${y0}V${y1}`).join('');
  return `<svg height="${c.h}" viewBox="0 0 363 ${c.h}"><svg x="0" y="0" width="363" height="${c.h}" viewBox="${ox} ${oy} 1089 ${c.h*3}"><path d="${path}" stroke="#414144" stroke-width="3" fill="none"/>${series(c.s(), Math.min(y1, oy + c.h*3))}</svg>
  ${ls.map((l,i)=>`<text x="${X(x0)-3}" y="${Yv(y0+i*step)+1.5}" text-anchor="end">${l}</text>`).join('')}
  ${c.h>20?DAYS.map((l,i)=>`<text x="${X(x0+i*dx)}" y="${Yv(y1)+7}" text-anchor="middle">${l}</text>`).join(''):''}</svg>`;
});
define('gf-panel', `
:host{background:#212124;position:relative;overflow:hidden;font:5px/8px Roboto,sans-serif;color:#e4e4e5}
h3{margin:0;font:500 5px/10px Roboto,sans-serif;text-align:center}
:host([hover]) h3{background:#36363a}
.rs{position:absolute;right:1px;bottom:1px}`, a=>`<h3>${a('label')}${a('hover')?' ▾':''}</h3><slot></slot><span class="rs">${ic('resize')}</span>`);
const LEG = {
user:[['MQ-102-KSHAMQ: CPU user time','4.60%','0.90%','0.04%'],['MQ-100-WMSAMQ: CPU user time','1.64%','0.48%','0.19%'],['MQ-101-CMSAMQ: CPU user time','2.26%','0.29%','0.31%'],['MQ-12-saveamq: CPU user time','4.02%','0.92%','0.71%'],['MQ-13-tmsamq: CPU user time','2.66%','0.90%','0.43%']],
sys:[['MQ-102-KSHAMQ: CPU system time','1.393%','0.365%','0.072%'],['MQ-100-WMSAMQ: CPU system time','1.586%','0.635%','0.386%'],['MQ-101-CMSAMQ: CPU system time','0.433%','0.179%','0.170%'],['MQ-12-saveamq: CPU system time','0.530%','0.230%','0.160%'],['MQ-13-tmsamq: CPU system time','1.110%','0.443%','0.259%']],
idle:[['MQ-102-KSHAMQ: CPU idle time','99.88%','97.93%','99.87%'],['MQ-100-WMSAMQ: CPU idle time','99.17%','98.21%','99.05%'],['MQ-101-CMSAMQ: CPU idle time','99.52%','99.45%','99.44%'],['MQ-12-saveamq: CPU idle time','99.75%','98.62%','99.24%'],['MQ-13-tmsamq: CPU idle time','99.71%','97.79%','99.03%'],['MQ-10-smsamq: CPU idle time','98.41%','94.88%','94.88%']],
net:[['MQ-102-KSHAMQ: Incoming network traffic on eth0','2.040 MB','420 kB','6 kB'],['MQ-102-KSHAMQ: Outgoing network traffic on eth0','1.606 MB','320 kB','5 kB'],['MQ-100-WMSAMQ: Incoming network traffic on eth0','832 kB','236 kB','113 kB'],['MQ-100-WMSAMQ: Outgoing network traffic on eth0','834 kB','312 kB','202 kB'],['MQ-101-CMSAMQ: Incoming network traffic on eth0','536 kB','176 kB','195 kB'],['MQ-101-CMSAMQ: Outgoing network traffic on eth0','1.244 MB','254 kB','1.426 MB']]};
define('gf-legend', `
:host{display:flex;overflow:hidden;padding:0 6px 0 9px;justify-content:space-between;font:4px/8px Roboto,sans-serif}
table{border-spacing:0;width:344px;table-layout:fixed}
th,td{padding:0;text-align:right;white-space:nowrap;font-weight:500}
td.n{text-align:left}
thead th{color:#33b5e5;height:8px;font-weight:700}
tbody tr{height:10px}tbody tr:nth-child(3n){height:9px}
tbody tr:nth-child(odd){background:#262628}
td:last-child,th:last-child{padding-right:2px}
i{display:inline-block;width:5px;height:1px;vertical-align:middle;margin:0 3px}
.sb{width:2px;height:32px;background:#404148;margin-top:2px}.sb.net{height:15px}.sb.idle{height:40px}`, a=>{
 const k=a('kind'), n=k==='net', w = k==='user'?22:n?29:24;
 return `<table><colgroup><col><col style="width:40px"><col style="width:${w}px"><col style="width:${n?31:k==='user'?24:27}px"></colgroup><thead><tr><th></th><th>max</th><th>avg</th><th>current</th></tr></thead><tbody>${LEG[k].map((r,i)=>`<tr><td class="n"><i style="background:${[G,Y,C,O,R,B][i]}"></i>${r[0]}</td><td>${r[1]}</td><td>${r[2]}</td><td>${r[3]}</td></tr>`).join('')}</tbody></table><div class="sb ${k}"></div>`});
define('gf-dashboard', `
:host{display:flex;width:769px;height:432px;background:#161719;overflow:hidden;font:5px/8px Roboto,sans-serif;color:#d8d9da;text-align:left}
aside{width:25px;background:#000;display:flex;flex-direction:column;align-items:center;padding:5px 0 4px}
aside a{height:18px;display:flex;align-items:center}
aside a.logo{height:12px;margin-bottom:20px}.sp{flex:1}
main{flex:1;padding:0 4px 0 6px;min-width:0}
header{display:flex;height:22px;align-items:center;font-size:7px}
h2{margin:0;font:400 7px/12px Roboto,sans-serif;color:#9a9a9c;margin-left:5px;flex:1}h2 b{color:#e8e8e8;font-weight:500}
header button{background:#27272a;height:12px;min-width:16px;margin-left:1px;font-size:5px;gap:2px;color:#aaa}
header button.w{width:18px}header button.v{width:18px;margin-left:4px}header button.t{width:93px;margin-left:5px;margin-right:1px}header button.t b{color:#eb8b28}
.strip{height:14px;background:#212124;overflow:hidden}.strip svg{display:block;font:4px Roboto,sans-serif;fill:#e4e4e5}
.grid{display:grid;grid-template-columns:1fr 1fr;gap:5px;padding-top:5px;grid-template-rows:171px 187px 23px}
.gf6{height:60px}.mt{display:flex;justify-content:space-between;padding:10px 73px 0 8px;font-weight:700;font-size:5px;line-height:6px}
.track{width:3px;height:86px;background:#3a3b42;margin-top:287px}`, `
<aside><a class="logo" href="#" aria-label="Grafana">${ic('graf')}</a>${['gplus','ggrid','gcomp','gbell','ggear','gshield'].map(n=>`<a href="#" aria-label="${n.slice(1)}">${ic(n)}</a>`).join('')}<span class="sp"></span><a href="#" aria-label="profile">${ic('gava')}</a><a href="#" aria-label="help">${ic('ghelp')}</a></aside>
<main><header>${ic('ggrid')}<h2>SAVE PRO / <b>MQ API ▾</b></h2><button class="w" aria-label="add">${ic('badd')}</button><button aria-label="star">${ic('bstar')}</button><button aria-label="share">${ic('bshare')}</button><button aria-label="save">${ic('bsave')}</button><button aria-label="settings">${ic('bgear')}</button><button class="v" aria-label="tv">${ic('btv')}</button><button class="t">${ic('bclock')}<span>Previous week <b>Refresh every 1m</b></span></button><button aria-label="zoom out">${ic('bzoom')}</button><button aria-label="refresh">${ic('bref')}</button></header>
<div class="strip"><svg width="731" height="14" viewBox="0 0 731 14"><path d="M18 1.500H522" stroke="#8a63c8" stroke-width="2" stroke-dasharray="2 1"/><path d="M87 1.500h4M98 1.500h2M136 1.500h2" stroke="#d44a9c" stroke-width="2"/><text x="13" y="4">0</text>${Array.from({length:14},(_,i)=>`<text x="${18+i*36}" y="9" text-anchor="middle">${['7/28','7/29','7/30','7/31','8/1','8/2','8/3'][i>>1]} ${i%2?'12':'00'}:00</text>`).join('')}</svg></div>
<div class="grid"><gf-panel label="Cpu User" hover="1"><gf-chart kind="user"></gf-chart><gf-legend kind="user"></gf-legend></gf-panel><gf-panel label="Cpu System"><gf-chart kind="sys"></gf-chart><gf-legend kind="sys"></gf-legend></gf-panel>
<gf-panel label="Cpu Idle"><gf-chart kind="idle"></gf-chart><gf-legend class="gf6" kind="idle"></gf-legend></gf-panel><gf-panel label="Network"><gf-chart kind="net"></gf-chart><gf-legend class="gf6" kind="net"></gf-legend></gf-panel>
<gf-panel label="Mem"><div class="mt"><span>Metric</span><span>Value</span></div></gf-panel><gf-panel label="Available memory"><gf-chart kind="avail"></gf-chart></gf-panel></div></main><div class="track"></div>`);

/* ---------- worksheet ---------- */
const COLW = [39,50,80,26,27,29,27,30,28,26,28,27,27,27,27,27,27,27,27,27,27,27,46,27,27,30,28,26,...Array(18).fill(27),32,27,27,26];
const colName = i => i < 26 ? String.fromCharCode(65+i) : 'A' + String.fromCharCode(39+i);
define('xl-sheet', `
:host{flex:1;min-height:0;overflow:hidden;display:flex;background:#fff}
.view{flex:1;min-width:0;overflow:hidden;border-right:1px solid #ababab}
table{border-spacing:0;table-layout:fixed;width:1481px}
td{padding:0;border:solid #dadada;border-width:0 1px 1px 0;position:relative}
th{padding:0;font:6px/6px "Liberation Sans",sans-serif;color:#111;background:#e6e6e6;border:solid #c4c4c4;border-width:0 1px 1px 0;text-align:center;vertical-align:bottom}
thead th{font:bold 5px/7px "Liberation Serif",serif;height:8px;border-bottom-color:#9f9f9f}
thead th.sel{background:#d2d2d2;border-bottom-color:#217346}
thead .ic{margin-left:auto}
tbody tr{height:7px}tbody tr.h9{height:9px}tbody tr.h10{height:10px}
td.t{font:bold 7px/8px "Liberation Mono","Noto Sans CJK SC",monospace;color:#000;padding-left:2px;white-space:nowrap;vertical-align:bottom}
tr.h9 td{border-bottom:0}
gf-dashboard{position:absolute;top:0;left:0;z-index:1}
.sb{width:18px;background:#dadada;display:flex;flex-direction:column;padding:2px 1px 0}
.sb button{height:16px;background:#fff;border:1px solid #c4c4c4}
.a{flex:460}.thumb{height:76px;background:#fff;border:1px solid #b9b9b9}.b{flex:123}`, () => `
<div class="view"><table aria-label="MQ"><colgroup><col style="width:12px">${COLW.map(w=>`<col style="width:${w}px">`).join('')}</colgroup>
<thead><tr><th>${ic('all')}</th>${COLW.map((_,i)=>`<th${i===2?' class="sel"':''}>${colName(i)}</th>`).join('')}</tr></thead>
<tbody>${Array.from({length:97},(_,k)=>{const n=442+k;return `<tr${n===445?' class="h9"':n===485?' class="h10"':''}><th>${n}</th>${COLW.map((_,i)=>i===2&&n===445?'<td class="t">CUP使用率：</td>':i===2&&n===446?'<td><gf-dashboard></gf-dashboard></td>':'<td></td>').join('')}</tr>`}).join('')}</tbody></table></div>
<div class="sb"><button aria-label="向上">${ic('su')}</button><div class="a"></div><div class="thumb"></div><div class="b"></div><button aria-label="向下">${ic('sd')}</button></div>`);

define('xl-sheetbar', `
:host{display:flex;height:20px;background:#e6e6e6;border-top:1px solid #ababab;border-bottom:1px solid #cfcfcf;align-items:stretch;font-size:14px;line-height:16px}
.nav{width:69px;display:flex;gap:15px;padding-left:16px}
.tabs{display:flex}.tabs a{padding:0 5px;border-left:1px solid #b5b5b5;white-space:nowrap;color:#444}
.tabs a.on{background:#fff;color:#217346;border-right:1px solid #b5b5b5;border-bottom:1px solid #217346}
.add{margin-left:23px}
.dots{margin-left:auto;width:12px;display:flex;align-items:center}
.hs{display:flex;width:232px;background:#dadada;margin:1px 18px 1px 0}
.hs button{width:17px;background:#fff;border:1px solid #c4c4c4}.hs div{width:58px;background:#fff;border:1px solid #c4c4c4;margin-right:auto}`, `
<div class="nav"><button aria-label="上一个">${ic('tl')}</button><button aria-label="下一个">${ic('tr')}</button></div>
<div class="tabs"><a href="#">汇总视图</a><a href="#">AMQ巡检报告</a><a href="#">备注</a><a href="#" class="on">MQ</a></div>
<button class="add" aria-label="新工作表">${ic('plus')}</button><span class="dots">${ic('dots')}</span>
<div class="hs"><button aria-label="向左">${ic('sl')}</button><div></div><button aria-label="向右">${ic('sr')}</button></div>`);

define('xl-status', `
:host{display:flex;height:33px;background:#f3f3f3;align-items:stretch;justify-content:flex-end;padding-right:13px;border-bottom:1px solid #8a8a8a}
.disp{margin-right:16px}.v{width:33px}.v.on{background:#c8c8c8}
.z{width:16px}
input{appearance:none;background:linear-gradient(#999,#999) center/100% 1px no-repeat,linear-gradient(#999,#999) 50% 50%/1px 5px no-repeat;width:98px;margin:0;border:0}
input::-webkit-slider-thumb{appearance:none;width:5px;height:12px;background:#666}
.p{width:31px;justify-content:flex-end}`, `
<button class="disp">${ic('disp')}显示器设置</button><button class="v on" aria-label="普通">${ic('v1')}</button><button class="v" aria-label="页面布局">${ic('v2')}</button><button class="v" aria-label="分页预览">${ic('v3')}</button><button class="z" aria-label="缩小">${ic('minus')}</button><input type="range" aria-label="缩放" min="0" max="100" value="16"><button class="z" aria-label="放大">${ic('add')}</button><button class="p">40%</button>`);

define('xl-desktop', `
:host{display:grid;grid-template:1fr 6px/1fr 7px;height:100vh}
.win{display:flex;flex-direction:column;min-width:0;min-height:0;overflow:hidden}
.side{background:linear-gradient(#1e54a8 0 4px,#d7e3f2 12px 26px,#0a5fcc 28px,#1268d2 90px,#9cc4ee 130px,#fff 165px 517px,#d6d2c8 517px 538px,#000 540px);display:flex;flex-direction:column}
.task{grid-column:1/-1;background:linear-gradient(90deg,#14181c,#0d1a20 60%,#11171a)}
.side svg{display:block}`, `
<div class="win"><xl-titlebar></xl-titlebar><xl-tabs></xl-tabs><xl-ribbon></xl-ribbon><xl-formula></xl-formula><xl-sheet></xl-sheet><xl-sheetbar></xl-sheetbar><xl-status></xl-status></div>
<div class="side"><svg width="7" height="540" viewBox="0 0 7 540" aria-hidden="true"><path d="M7 3a4 4 0 1 0 0 7M3 6h4" fill="none" stroke="#e8c030" stroke-width="1.500"/><circle cx="8" cy="20" r="5" fill="none" stroke="#2a70c8" stroke-width="3"/><path d="M3 527q1-3 4-2v3H3z" fill="#d8502a"/><path d="M2 529h5v5H4z" fill="#e8c030"/></svg></div><div class="task"></div>`);
</script>
</body>
</html>
